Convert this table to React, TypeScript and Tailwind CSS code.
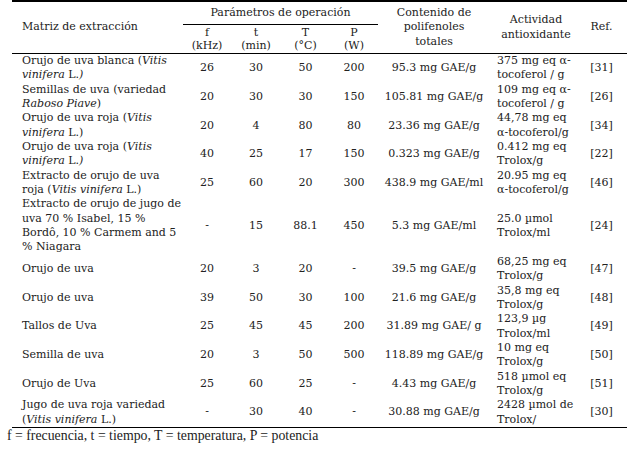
import React from 'react';

type Row = {
  matriz: React.ReactNode;
  f: string;
  t: string;
  T: string;
  P: string;
  contenido: string;
  actividad: React.ReactNode;
  ref: string;
};

const rows: Row[] = [
  {
    matriz: (
      <>
        Orujo de uva blanca (<i>Vitis</i>
        <br />
        <i>vinifera</i> L.<i>)</i>
      </>
    ),
    f: '26',
    t: '30',
    T: '50',
    P: '200',
    contenido: '95.3 mg GAE/g',
    actividad: (
      <>
        375 mg eq α-
        <br />
        tocoferol / g
      </>
    ),
    ref: '[31]',
  },
  {
    matriz: (
      <>
        Semillas de uva (variedad
        <br />
        <i>Raboso Piave</i>)
      </>
    ),
    f: '20',
    t: '30',
    T: '30',
    P: '150',
    contenido: '105.81 mg GAE/g',
    actividad: (
      <>
        109 mg eq α-
        <br />
        tocoferol / g
      </>
    ),
    ref: '[26]',
  },
  {
    matriz: (
      <>
        Orujo de uva roja (<i>Vitis</i>
        <br />
        <i>vinifera</i> L.)
      </>
    ),
    f: '20',
    t: '4',
    T: '80',
    P: '80',
    contenido: '23.36 mg GAE/g',
    actividad: (
      <>
        44,78 mg eq
        <br />
        α-tocoferol/g
      </>
    ),
    ref: '[34]',
  },
  {
    matriz: (
      <>
        Orujo de uva roja (<i>Vitis</i>
        <br />
        <i>vinifera</i> L.<i>)</i>
      </>
    ),
    f: '40',
    t: '25',
    T: '17',
    P: '150',
    contenido: '0.323 mg GAE/g',
    actividad: (
      <>
        0.412 mg eq
        <br />
        Trolox/g
      </>
    ),
    ref: '[22]',
  },
  {
    matriz: (
      <>
        Extracto de orujo de uva
        <br />
        roja (<i>Vitis vinifera</i> L.)
      </>
    ),
    f: '25',
    t: '60',
    T: '20',
    P: '300',
    contenido: '438.9 mg GAE/ml',
    actividad: (
      <>
        20.95 mg eq
        <br />
        α-tocoferol/g
      </>
    ),
    ref: '[46]',
  },
  {
    matriz: (
      <>
        Extracto de orujo de jugo de
        <br />
        uva 70 % Isabel, 15 %
        <br />
        Bordô, 10 % Carmem and 5
        <br />% Niagara
      </>
    ),
    f: '-',
    t: '15',
    T: '88.1',
    P: '450',
    contenido: '5.3 mg GAE/ml',
    actividad: (
      <>
        25.0 µmol
        <br />
        Trolox/ml
      </>
    ),
    ref: '[24]',
  },
  {
    matriz: 'Orujo de uva',
    f: '20',
    t: '3',
    T: '20',
    P: '-',
    contenido: '39.5 mg GAE/g',
    actividad: (
      <>
        68,25 mg eq
        <br />
        Trolox/g
      </>
    ),
    ref: '[47]',
  },
  {
    matriz: 'Orujo de uva',
    f: '39',
    t: '50',
    T: '30',
    P: '100',
    contenido: '21.6 mg GAE/g',
    actividad: (
      <>
        35,8 mg eq
        <br />
        Trolox/g
      </>
    ),
    ref: '[48]',
  },
  {
    matriz: 'Tallos de Uva',
    f: '25',
    t: '45',
    T: '45',
    P: '200',
    contenido: '31.89 mg GAE/ g',
    actividad: (
      <>
        123,9 µg
        <br />
        Trolox/ml
      </>
    ),
    ref: '[49]',
  },
  {
    matriz: 'Semilla de uva',
    f: '20',
    t: '3',
    T: '50',
    P: '500',
    contenido: '118.89 mg GAE/g',
    actividad: (
      <>
        10 mg eq
        <br />
        Trolox/g
      </>
    ),
    ref: '[50]',
  },
  {
    matriz: 'Orujo de Uva',
    f: '25',
    t: '60',
    T: '25',
    P: '-',
    contenido: '4.43 mg GAE/g',
    actividad: (
      <>
        518 µmol eq
        <br />
        Trolox/g
      </>
    ),
    ref: '[51]',
  },
  {
    matriz: (
      <>
        Jugo de uva roja variedad
        <br />(<i>Vitis vinifera</i> L.)
      </>
    ),
    f: '-',
    t: '30',
    T: '40',
    P: '-',
    contenido: '30.88 mg GAE/g',
    actividad: (
      <>
        2428 µmol de
        <br />
        Trolox/
      </>
    ),
    ref: '[30]',
  },
];

const cols = 'grid grid-cols-[171px_48px_50px_49px_48px_112px_92px_45px]';

export default function App() {
  return (
    <main className="w-[627px] h-[449px] bg-white overflow-hidden text-[#222] font-['DejaVu_Serif',serif] text-[11px] leading-[14.35px]">
      <div className="ml-[12px] w-[615px]">
        {/* header */}
        <div className={`${cols} grid-rows-[23px_28px] border-t-2 border-b border-black`}>
          <div className="row-span-2 flex items-center pl-[10px] whitespace-nowrap">Matriz de extracción</div>
          <div className="col-span-4 flex items-center justify-center border-b border-black whitespace-nowrap">
            Parámetros de operación
          </div>
          <div className="row-span-2 flex items-center justify-center text-center">
            Contenido de
            <br />
            polifenoles
            <br />
            totales
          </div>
          <div className="row-span-2 flex items-center justify-center text-center">
            Actividad
            <br />
            antioxidante
          </div>
          <div className="row-span-2 flex items-center justify-center pr-[6px]">Ref.</div>
          <HeadUnit top="f" unit="(kHz)" />
          <HeadUnit top="t" unit="(min)" />
          <HeadUnit top="T" unit="(°C)" />
          <HeadUnit top="P" unit="(W)" />
        </div>

        {/* body */}
        <div className="border-b border-black">
          {rows.map((r, i) => (
            <div key={i} className={`${cols} items-center`}>
              <div className="pl-[10px] whitespace-nowrap">{r.matriz}</div>
              <div className="text-center">{r.f}</div>
              <div className="text-center">{r.t}</div>
              <div className="text-center">{r.T}</div>
              <div className="text-center">{r.P}</div>
              <div className="text-center whitespace-nowrap">{r.contenido}</div>
              <div className="pl-[7px] whitespace-nowrap">{r.actividad}</div>
              <div className="text-center pr-[6px]">{r.ref}</div>
            </div>
          ))}
        </div>
      </div>
      <p className="pl-[7px] font-['Liberation_Serif',serif] text-[13.8px] leading-[16px] whitespace-nowrap">
        f = frecuencia, t = tiempo, T = temperatura, P = potencia
      </p>
    </main>
  );
}

function HeadUnit({ top, unit }: { top: string; unit: string }) {
  return (
    <div className="flex flex-col items-center justify-center leading-[13px]">
      <span>{top}</span>
      <span>{unit}</span>
    </div>
  );
}
